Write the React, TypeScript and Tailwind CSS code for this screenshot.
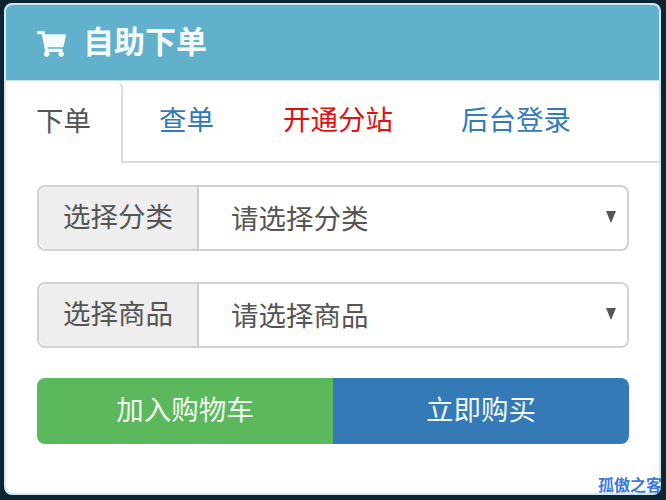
import { FaShoppingCart } from "react-icons/fa";

const cjk = "font-['Liberation_Sans','Noto_Sans_CJK_SC',sans-serif]";

function SelectRow({ label, placeholder }: { label: string; placeholder: string }) {
  return (
    <div className="flex h-[66px] rounded-lg border-2 border-[#d2d2d2]">
      <div className="flex w-[160px] shrink-0 items-center justify-center rounded-l-lg border-r-2 border-[#cccccc] bg-[#eeeeee] text-[27.5px] text-[#555555]">
        {label}
      </div>
      <div className="flex flex-1 items-center justify-between rounded-r-lg bg-white pl-[32px] pr-[11px] pt-[4px] text-[27.5px] text-[#555555]">
        <span>{placeholder}</span>
        <span className="mb-[6px] h-0 w-0 border-x-[5px] border-t-[12px] border-x-transparent border-t-[#555555]" />
      </div>
    </div>
  );
}

export default function App() {
  return (
    <div className={`relative h-[500px] w-[666px] overflow-hidden bg-[#0c2433] pb-[5px] pl-[4px] pr-[5px] pt-[3px] ${cjk}`}>
      <div className="flex h-full flex-col overflow-hidden rounded-lg border-2 border-[#cfe9f2] bg-white">
        <div className="flex h-[76px] shrink-0 items-center gap-[17px] border-b border-[#c6dfe8] bg-[#62b1cc] pl-[31px] pt-[2px] text-[31px] font-bold text-[#f4fbfd]">
          <FaShoppingCart className="h-[26px] w-[29px]" />
          <span>自助下单</span>
        </div>

        <div className="flex h-[82px] shrink-0 border-b-2 border-[#dddddd] text-[27.5px]">
          <div className="mb-[-2px] flex w-[117px] items-center justify-center rounded-t-lg border-r-2 border-[#dddddd] bg-white text-[#555555]">
            下单
          </div>
          <div className="ml-[36px] flex items-center text-[#337ab7]">查单</div>
          <div className="ml-[69px] flex items-center text-[#e01010]">开通分站</div>
          <div className="ml-[68px] flex items-center text-[#337ab7]">后台登录</div>
        </div>

        <div className="flex flex-col pl-[31px] pr-[30px] pt-[22px]">
          <div className="flex flex-col gap-[31px]">
            <SelectRow label="选择分类" placeholder="请选择分类" />
            <SelectRow label="选择商品" placeholder="请选择商品" />
          </div>
          <div className="mt-[30px] flex h-[66px] overflow-hidden rounded-lg text-[27.5px] text-[#f2f8f2]">
            <div className="flex w-[296px] items-center justify-center bg-[#5cb85c]">加入购物车</div>
            <div className="flex flex-1 items-center justify-center bg-[#337ab7]">立即购买</div>
          </div>
        </div>
      </div>

      <span className="absolute bottom-[2px] right-[4px] text-[16px] font-bold text-[#3f78e0]">孤傲之客</span>
    </div>
  );
}
